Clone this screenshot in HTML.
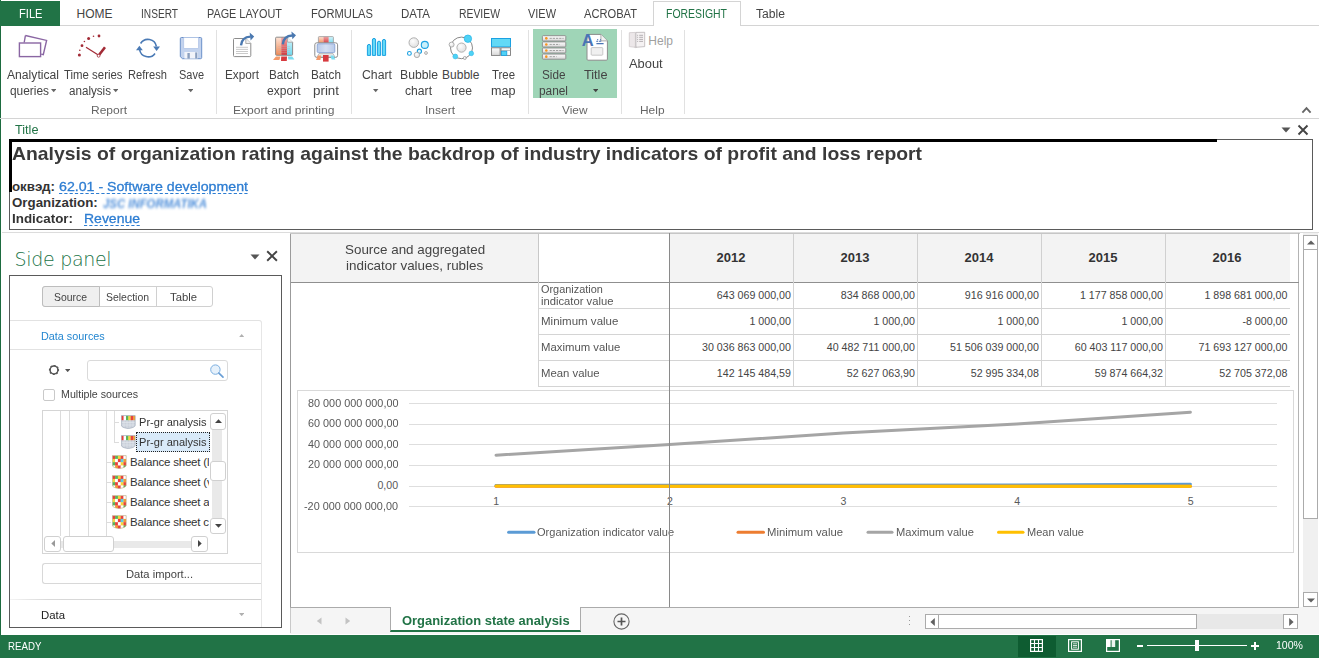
<!DOCTYPE html>
<html><head><meta charset="utf-8"><title>Organization state analysis</title>
<style>
html,body{margin:0;padding:0;background:#fff;}
body{width:1319px;height:658px;position:relative;overflow:hidden;font-family:"Liberation Sans",sans-serif;}
#app{position:absolute;left:0;top:0;width:1319px;height:658px;overflow:hidden;background:#fff;}
#app div,#app span.t,#app svg{position:absolute;box-sizing:border-box;}
span.t{white-space:nowrap;display:block;transform-origin:0 0;}
</style></head><body><div id="app">
<div style="left:0px;top:0px;width:1px;height:658px;background:#1d6b3f;"></div>
<div style="left:0px;top:25px;width:1319px;height:1px;background:#d4d4d4;"></div>
<div style="left:0px;top:1px;width:60px;height:25px;background:#217346;"></div>
<span class="t" style="left:19px;top:6px;font-size:12px;line-height:16px;color:#fff;transform:scaleX(0.9274);">FILE</span>
<span class="t" style="left:76.5px;top:6px;font-size:12px;line-height:16px;color:#444;">HOME</span>
<span class="t" style="left:140.5px;top:6px;font-size:12px;line-height:16px;color:#444;transform:scaleX(0.8450);">INSERT</span>
<span class="t" style="left:206.5px;top:6px;font-size:12px;line-height:16px;color:#444;transform:scaleX(0.9046);">PAGE LAYOUT</span>
<span class="t" style="left:310.5px;top:6px;font-size:12px;line-height:16px;color:#444;transform:scaleX(0.9299);">FORMULAS</span>
<span class="t" style="left:400.5px;top:6px;font-size:12px;line-height:16px;color:#444;transform:scaleX(0.9595);">DATA</span>
<span class="t" style="left:458.5px;top:6px;font-size:12px;line-height:16px;color:#444;transform:scaleX(0.8661);">REVIEW</span>
<span class="t" style="left:527.5px;top:6px;font-size:12px;line-height:16px;color:#444;transform:scaleX(0.9130);">VIEW</span>
<span class="t" style="left:583.5px;top:6px;font-size:12px;line-height:16px;color:#444;transform:scaleX(0.9279);">ACROBAT</span>
<div style="left:653px;top:1px;width:88px;height:25px;background:#fff;border:1px solid #d4d4d4;border-bottom:none;"></div>
<span class="t" style="left:665.5px;top:6px;font-size:12px;line-height:16px;color:#217346;transform:scaleX(0.8714);">FORESIGHT</span>
<span class="t" style="left:755.5px;top:6px;font-size:12px;line-height:16px;color:#444;transform:scaleX(1.0110);">Table</span>
<div style="left:0px;top:118px;width:1319px;height:1px;background:#d4d4d4;"></div>
<div style="left:216px;top:30px;width:1px;height:84px;background:#e1e1e1;"></div>
<div style="left:351px;top:30px;width:1px;height:84px;background:#e1e1e1;"></div>
<div style="left:528px;top:30px;width:1px;height:84px;background:#e1e1e1;"></div>
<div style="left:621px;top:30px;width:1px;height:84px;background:#e1e1e1;"></div>
<div style="left:684px;top:30px;width:1px;height:84px;background:#e1e1e1;"></div>
<div style="left:533px;top:29px;width:84px;height:69px;background:#9fd5b7;"></div>
<span class="t" style="left:6.5px;top:67px;font-size:12px;line-height:16px;color:#444;transform:scaleX(1.0125);">Analytical</span>
<span class="t" style="left:9.5px;top:83px;font-size:12px;line-height:16px;color:#444;transform:scaleX(0.9910);">queries</span>
<svg style="left:51px;top:89px" width="5.4" height="4" viewBox="0 0 5.4 4"><path d="M0 0h5.4 l-2.7 3.2z" fill="#666"/></svg>
<span class="t" style="left:64.45px;top:67px;font-size:12px;line-height:16px;color:#444;transform:scaleX(0.9503);">Time series</span>
<span class="t" style="left:68.5px;top:83px;font-size:12px;line-height:16px;color:#444;transform:scaleX(0.9688);">analysis</span>
<svg style="left:112.5px;top:89px" width="5.4" height="4" viewBox="0 0 5.4 4"><path d="M0 0h5.4 l-2.7 3.2z" fill="#666"/></svg>
<span class="t" style="left:127.5px;top:67px;font-size:12px;line-height:16px;color:#444;transform:scaleX(0.9282);">Refresh</span>
<span class="t" style="left:178.5px;top:67px;font-size:12px;line-height:16px;color:#444;transform:scaleX(0.9141);">Save</span>
<svg style="left:187.8px;top:89px" width="5.4" height="4" viewBox="0 0 5.4 4"><path d="M0 0h5.4 l-2.7 3.2z" fill="#666"/></svg>
<span class="t" style="left:224.5px;top:67px;font-size:12px;line-height:16px;color:#444;transform:scaleX(0.9804);">Export</span>
<span class="t" style="left:268.5px;top:67px;font-size:12px;line-height:16px;color:#444;transform:scaleX(0.9777);">Batch</span>
<span class="t" style="left:266.95px;top:83px;font-size:12px;line-height:16px;color:#444;transform:scaleX(1.0045);">export</span>
<span class="t" style="left:310.5px;top:67px;font-size:12px;line-height:16px;color:#444;transform:scaleX(0.9777);">Batch</span>
<span class="t" style="left:312.5px;top:83px;font-size:12px;line-height:16px;color:#444;transform:scaleX(1.1139);">print</span>
<span class="t" style="left:361.5px;top:67px;font-size:12px;line-height:16px;color:#444;transform:scaleX(1.0224);">Chart</span>
<svg style="left:373.3px;top:89px" width="5.4" height="4" viewBox="0 0 5.4 4"><path d="M0 0h5.4 l-2.7 3.2z" fill="#666"/></svg>
<span class="t" style="left:399.5px;top:67px;font-size:12px;line-height:16px;color:#444;transform:scaleX(1.0170);">Bubble</span>
<span class="t" style="left:405.1px;top:83px;font-size:12px;line-height:16px;color:#444;transform:scaleX(1.0122);">chart</span>
<span class="t" style="left:442.05px;top:67px;font-size:12px;line-height:16px;color:#444;">Bubble</span>
<span class="t" style="left:450.5px;top:83px;font-size:12px;line-height:16px;color:#444;transform:scaleX(1.0157);">tree</span>
<span class="t" style="left:491.5px;top:67px;font-size:12px;line-height:16px;color:#444;transform:scaleX(0.9494);">Tree</span>
<span class="t" style="left:490.55px;top:83px;font-size:12px;line-height:16px;color:#444;transform:scaleX(1.0496);">map</span>
<span class="t" style="left:541.95px;top:67px;font-size:12px;line-height:16px;color:#444;transform:scaleX(0.9785);">Side</span>
<span class="t" style="left:538.5px;top:83px;font-size:12px;line-height:16px;color:#444;transform:scaleX(0.9878);">panel</span>
<span class="t" style="left:583.95px;top:67px;font-size:12px;line-height:16px;color:#444;transform:scaleX(1.0574);">Title</span>
<svg style="left:592.6px;top:89px" width="5.4" height="4" viewBox="0 0 5.4 4"><path d="M0 0h5.4 l-2.7 3.2z" fill="#444"/></svg>
<span class="t" style="left:648.3px;top:33px;font-size:12px;line-height:16px;color:#a0a0a0;">Help</span>
<span class="t" style="left:628.5px;top:56px;font-size:12px;line-height:16px;color:#444;transform:scaleX(1.0747);">About</span>
<span class="t" style="left:90.5px;top:103px;font-size:11px;line-height:14px;color:#666;transform:scaleX(1.0905);">Report</span>
<span class="t" style="left:232.55px;top:103px;font-size:11px;line-height:14px;color:#666;transform:scaleX(1.0993);">Export and printing</span>
<span class="t" style="left:424.5px;top:103px;font-size:11px;line-height:14px;color:#666;transform:scaleX(1.0906);">Insert</span>
<span class="t" style="left:561.95px;top:103px;font-size:11px;line-height:14px;color:#666;transform:scaleX(1.0785);">View</span>
<span class="t" style="left:640.45px;top:103px;font-size:11px;line-height:14px;color:#666;transform:scaleX(1.0830);">Help</span>
<svg style="left:1300px;top:105px" width="14" height="10" viewBox="0 0 14 10"><path d="M2.4 7.6 L6.5 3.2 L10.6 7.6" fill="none" stroke="#666" stroke-width="1.9"/></svg>
<svg style="left:0;top:0" width="700" height="70" viewBox="0 0 700 70"><defs>
<linearGradient id="gO" x1="0" y1="0" x2="0" y2="1"><stop offset="0" stop-color="#fde3d6"/><stop offset="1" stop-color="#f08a55"/></linearGradient>
<linearGradient id="gR" x1="0" y1="0" x2="0" y2="1"><stop offset="0" stop-color="#f0a3a3"/><stop offset="1" stop-color="#d23a3f"/></linearGradient>
<linearGradient id="gC" x1="0" y1="0" x2="0" y2="1"><stop offset="0" stop-color="#d9f6fc"/><stop offset="1" stop-color="#6fd8ee"/></linearGradient>
<linearGradient id="gG" x1="0" y1="0" x2="0" y2="1"><stop offset="0" stop-color="#fdfdfd"/><stop offset="1" stop-color="#d8d8d8"/></linearGradient>
<radialGradient id="gS" cx="0.4" cy="0.35" r="0.7"><stop offset="0" stop-color="#fdfdfd"/><stop offset="1" stop-color="#dedede"/></radialGradient>
<linearGradient id="gB" x1="0" y1="0" x2="1" y2="0"><stop offset="0" stop-color="#b9cbea"/><stop offset="0.5" stop-color="#d6e0f3"/><stop offset="1" stop-color="#b9cbea"/></linearGradient>
</defs><path d="M25.4 35.5 L46.6 40.4 L43.3 54.6 L41.2 54.1" fill="none" stroke="#8a66a3" stroke-width="1.4"/><path d="M25.4 35.5 L24.2 42.5" fill="none" stroke="#8a66a3" stroke-width="1.4"/><rect x="19.4" y="43" width="21.2" height="13.6" fill="#fff" stroke="#8a66a3" stroke-width="1.4"/><circle cx="79.4" cy="55" r="1.5" fill="#a22a35"/><circle cx="79.8" cy="50.2" r="0.8" fill="#a22a35"/><circle cx="82" cy="45.7" r="1.4" fill="#a22a35"/><circle cx="84.4" cy="41.5" r="0.8" fill="#a22a35"/><circle cx="88.6" cy="38.6" r="1.5" fill="#a22a35"/><circle cx="93.5" cy="36.3" r="0.8" fill="#a22a35"/><circle cx="99" cy="36" r="1.4" fill="#a22a35"/><path d="M98.3 55 L86 47.2" stroke="#a22a35" stroke-width="1.25" fill="none"/><path d="M99.2 54.8 L105 47.3" stroke="#a22a35" stroke-width="2.6" fill="none"/><circle cx="98.6" cy="55.8" r="1.4" fill="#fff" stroke="#a22a35" stroke-width="0.8"/><path d="M140.6 43.5 A8.6 8.6 0 0 1 156.4 46.5" fill="none" stroke="#4a7ab5" stroke-width="1.6"/><path d="M153.2 46.6 L160 46.6 L156.6 51 Z" fill="#4a7ab5"/><path d="M155 53.4 A8.6 8.6 0 0 1 139.6 49.5" fill="none" stroke="#4a7ab5" stroke-width="1.6"/><path d="M136 50.2 L142.8 50.2 L139.4 45.8 Z" fill="#4a7ab5"/><path d="M181.5 37.5 h19 a1.2 1.2 0 0 1 1.2 1.2 v18.8 a1.2 1.2 0 0 1 -1.2 1.2 h-18 l-2.2 -2 v-18 a1.2 1.2 0 0 1 1.2 -1.2z" fill="#c3d3ee" stroke="#6b90c9" stroke-width="1"/><rect x="183.8" y="37.5" width="14.6" height="10.8" fill="#fff" stroke="#a9bfe4" stroke-width="0.6"/><rect x="184.4" y="52" width="13.2" height="6.6" fill="#f2f4fa"/><rect x="187.4" y="53" width="2.4" height="5.6" fill="#8a9fbf"/><rect x="195.2" y="52.4" width="2" height="6.2" fill="#8a9fbf"/><path d="M234.5 38.5 H245.8 L250.8 43.5 V55.6 a1 1 0 0 1 -1 1 H234.5 a1 1 0 0 1 -1 -1 V39.5 a1 1 0 0 1 1 -1z" fill="#fff" stroke="#8c8c8c" stroke-width="1"/><path d="M245.8 38.5 V43.5 H250.8" fill="#f2f2f2" stroke="#9a9a9a" stroke-width="0.8"/><path d="M236 47.3 H248" stroke="#c4c4c4" stroke-width="0.9"/><path d="M236 49.4 H248" stroke="#c4c4c4" stroke-width="0.9"/><path d="M236 51.5 H248" stroke="#c4c4c4" stroke-width="0.9"/><path d="M236 53.5 H248" stroke="#c4c4c4" stroke-width="0.9"/><path d="M241 45.4 C241.5 40 244.5 36.8 250.5 36.6" fill="none" stroke="#4a78b0" stroke-width="2.4"/><path d="M249.6 32.6 L254.2 36.4 L250.6 40.4 Z" fill="#4a78b0"/><rect x="275.6" y="37.2" width="5.6" height="18" fill="url(#gO)"/><rect x="281.2" y="37.2" width="5.8" height="18" fill="url(#gR)"/><rect x="287" y="37.2" width="5.6" height="18" fill="url(#gC)"/><path d="M276.6 37.2 H287.6 L292.6 42.2 V54.3 a1 1 0 0 1 -1 1 H276.6 a1 1 0 0 1 -1 -1 V38.2 a1 1 0 0 1 1 -1z" fill="none" stroke="#8c8c8c" stroke-width="1"/><path d="M287.6 37.2 H293.2 V42.2 Z" fill="#fff"/><path d="M287.6 37.2 V42.2 H292.6" fill="#f2f2f2" stroke="#9a9a9a" stroke-width="0.8"/><path d="M278 46.3 H290" stroke="#c9a9a9" stroke-width="0.6" opacity="0.7"/><path d="M278 48.3 H290" stroke="#c9a9a9" stroke-width="0.6" opacity="0.7"/><path d="M278 50.3 H290" stroke="#c9a9a9" stroke-width="0.6" opacity="0.7"/><path d="M278 52.3 H290" stroke="#c9a9a9" stroke-width="0.6" opacity="0.7"/><path d="M276 56.4 H280.4 L279.4 60 H273 Z" fill="#f49a6a"/><path d="M281.2 56.4 H287 L286.8 61 H281 Z" fill="#d73a3f"/><path d="M287.8 56.4 H292.2 L294.4 59.4 H288.4 Z" fill="#7adcf0"/><path d="M282.8 44.3 C283.3 38.9 286.3 35.7 292.3 35.5" fill="none" stroke="#4a78b0" stroke-width="2.4"/><path d="M291.4 31.5 L296 35.3 L292.4 39.3 Z" fill="#4a78b0"/><rect x="318.4" y="36.6" width="5" height="7" fill="url(#gO)"/><rect x="323.4" y="36.6" width="5.4" height="7" fill="url(#gR)"/><rect x="328.8" y="36.6" width="4.6" height="7" fill="url(#gC)"/><rect x="318.4" y="36.6" width="15" height="7" fill="none" stroke="#9a9a9a" stroke-width="0.8" rx="0.8"/><rect x="314.8" y="42.8" width="22.8" height="14.6" rx="2" fill="#fff" stroke="#8c8c8c" stroke-width="1"/><rect x="317.2" y="43.8" width="17.6" height="8.8" rx="1.2" fill="url(#gB)" stroke="#7f9bd0" stroke-width="0.8"/><path d="M319 53.6 H333 L335 57 H317 Z" fill="#e9e9e9" stroke="#9a9a9a" stroke-width="0.6"/><path d="M318 55.4 H321.2 L320.4 60 H316 Z" fill="#f49a6a"/><path d="M323 55 H328.6 V61.6 H323 Z" fill="#d73a3f"/><path d="M330.4 55.4 H333.4 L335.4 59.6 H331.6 Z" fill="#7adcf0"/><path d="M367.4 55.4 V46 a1.6 1.6 0 0 1 3.2 0 V55.4 Z" fill="#62d9f6" stroke="#1ba1e2" stroke-width="1"/><path d="M372.4 55.4 V40 a1.6 1.6 0 0 1 3.2 0 V55.4 Z" fill="#62d9f6" stroke="#1ba1e2" stroke-width="1"/><path d="M377.4 55.4 V42.8 a1.6 1.6 0 0 1 3.2 0 V55.4 Z" fill="#62d9f6" stroke="#1ba1e2" stroke-width="1"/><path d="M382.4 55.4 V41 a1.6 1.6 0 0 1 3.2 0 V55.4 Z" fill="#62d9f6" stroke="#1ba1e2" stroke-width="1"/><circle cx="413.8" cy="42.6" r="4.8" fill="url(#gS)" stroke="#a8a8a8" stroke-width="0.9"/><circle cx="424.8" cy="44.9" r="3.5" fill="#c9f0fb" stroke="#1ba1e2" stroke-width="1.1"/><circle cx="409.4" cy="53.4" r="1.9" fill="#fff" stroke="#1ba1e2" stroke-width="1.1"/><circle cx="419.4" cy="51.2" r="2.1" fill="#e4f7fd" stroke="#1ba1e2" stroke-width="1.1"/><circle cx="416.9" cy="54.9" r="2.7" fill="url(#gS)" stroke="#a8a8a8" stroke-width="0.9"/><circle cx="426" cy="53" r="1.4" fill="url(#gS)" stroke="#a8a8a8" stroke-width="0.9"/><ellipse cx="461.5" cy="47.9" rx="11" ry="10.8" fill="none" stroke="#7a7a7a" stroke-width="0.9"/><circle cx="461.5" cy="47.6" r="4.6" fill="url(#gS)" stroke="#a8a8a8" stroke-width="0.9"/><circle cx="467.9" cy="38.7" r="3.7" fill="#4fd2f5" stroke="#2bb8ea" stroke-width="0.8"/><circle cx="451.6" cy="44.6" r="2.5" fill="url(#gS)" stroke="#a8a8a8" stroke-width="0.9"/><circle cx="471.3" cy="53.4" r="2.3" fill="#4fd2f5" stroke="#2bb8ea" stroke-width="0.6"/><circle cx="455.3" cy="56.5" r="2.4" fill="#4fd2f5" stroke="#2bb8ea" stroke-width="0.6"/><circle cx="464.8" cy="58" r="1.5" fill="url(#gS)" stroke="#a8a8a8" stroke-width="0.9"/><rect x="491.5" y="38.5" width="19" height="8.4" fill="#62d9f6" stroke="#1ba1e2" stroke-width="1"/><rect x="491.5" y="47.8" width="8.6" height="7.6" fill="url(#gG)" stroke="#7c7c7c" stroke-width="0.9"/><rect x="501" y="47.8" width="9.5" height="7.6" fill="#fff" stroke="#7c7c7c" stroke-width="0.9"/><path d="M501 50.4 H510.5" stroke="#9a9a9a" stroke-width="0.7"/><rect x="501.4" y="51.2" width="5.4" height="4.2" fill="#4fd2f5" stroke="#1ba1e2" stroke-width="0.8"/><rect x="542.4" y="35.7" width="23.4" height="5.3" rx="0.8" fill="url(#gG)" stroke="#8a8a8a" stroke-width="0.9"/><circle cx="546.3" cy="38.35" r="1.3" fill="#f7941d"/><path d="M549.6 38.35 h14" stroke="#9a9a9a" stroke-width="0.9" stroke-dasharray="2.2 1"/><rect x="542.4" y="41.9" width="23.4" height="5.1" rx="0.8" fill="url(#gG)" stroke="#8a8a8a" stroke-width="0.9"/><circle cx="546.3" cy="44.45" r="1.3" fill="#f7941d"/><path d="M549.6 44.45 h10" stroke="#9a9a9a" stroke-width="0.9" stroke-dasharray="2.2 1"/><rect x="542.4" y="48" width="23.4" height="5" rx="0.8" fill="url(#gG)" stroke="#8a8a8a" stroke-width="0.9"/><circle cx="546.3" cy="50.5" r="1.3" fill="#f7941d"/><path d="M549.6 50.5 h14" stroke="#9a9a9a" stroke-width="0.9" stroke-dasharray="2.2 1"/><rect x="542.4" y="54.1" width="23.4" height="5.1" rx="0.8" fill="url(#gG)" stroke="#8a8a8a" stroke-width="0.9"/><circle cx="546.3" cy="56.65" r="1.3" fill="#f7941d"/><path d="M549.6 56.65 h7" stroke="#9a9a9a" stroke-width="0.9" stroke-dasharray="2.2 1"/><path d="M588 34.4 H600.9 L607.4 40.9 V59.2 a1 1 0 0 1 -1 1 H588 a1 1 0 0 1 -1 -1 V35.4 a1 1 0 0 1 1 -1z" fill="#fff" stroke="#8c8c8c" stroke-width="1"/><path d="M600.9 34.4 V40.9 H607.4" fill="#f2f2f2" stroke="#9a9a9a" stroke-width="0.8"/><rect x="591.2" y="47.6" width="11.6" height="7.6" rx="0.8" fill="#f0f0f0" stroke="#bdbdbd" stroke-width="0.8"/><text x="581.8" y="46" font-family="Liberation Sans,sans-serif" font-weight="bold" font-size="16.5" fill="#4a74b4">A</text><path d="M596.4 43.6 H603.6 M596.4 41.4 h1.4 M598.8 41.2 h2.4 M597.2 39.6 h1 M600 39.8 h1" stroke="#4a74b4" stroke-width="1.1"/><path d="M629.3 32.7 L635.4 32.4 V47.3 L629.3 46.6 Z" fill="#ece7e9" stroke="#cfc9cc" stroke-width="0.8"/><path d="M635.9 32.4 L644.7 32.3 V46.6 L635.9 47.3 Z" fill="#f5f2f3" stroke="#b9b4b6" stroke-width="0.8"/><path d="M634.4 47 Q635.6 48.2 636.8 47" fill="none" stroke="#c2bcbf" stroke-width="0.8"/><path d="M637.1 35.3 h1 M639.2 35.3 h3.8" stroke="#a5a0a2" stroke-width="0.8"/><path d="M637.1 37.3 h1 M639.2 37.3 h3.8" stroke="#a5a0a2" stroke-width="0.8"/><path d="M637.1 39.4 h1 M639.2 39.4 h3.8" stroke="#a5a0a2" stroke-width="0.8"/><path d="M637.1 41.4 h1 M639.2 41.4 h3.8" stroke="#a5a0a2" stroke-width="0.8"/></svg>
<span class="t" style="left:15px;top:122px;font-size:12px;line-height:16px;color:#217346;transform:scaleX(1.0574);">Title</span>
<svg style="left:1280.5px;top:127.4px" width="10" height="6" viewBox="0 0 10 6"><path d="M0.5 0.5 H9.5 L5 5.5 Z" fill="#555"/></svg>
<svg style="left:1297px;top:124px" width="12" height="12" viewBox="0 0 12 12"><path d="M1.5 1.5 L10.5 10.5 M10.5 1.5 L1.5 10.5" stroke="#444" stroke-width="1.9" fill="none"/></svg>
<div style="left:9px;top:139px;width:1304px;height:91px;border:1px solid #5a5a5a;background:#fff;"></div>
<div style="left:9px;top:139px;width:1208px;height:3px;background:#000;"></div>
<div style="left:9px;top:139px;width:3px;height:53px;background:#000;"></div>
<span class="t" style="left:11.5px;top:142px;font-size:19px;line-height:24px;color:#3a3a3a;font-weight:bold;transform:scaleX(1.0190);">Analysis of organization rating against the backdrop of industry indicators of profit and loss report</span>
<span class="t" style="left:12px;top:179px;font-size:13.3px;line-height:16px;color:#333;font-weight:bold;">оквэд:</span>
<span class="t" style="left:58.5px;top:179px;font-size:13.3px;line-height:16px;color:#2d7dd2;transform:scaleX(1.0652);text-decoration:underline dashed #2d7dd2 1px;text-underline-offset:2px;-webkit-text-stroke:0.3px #2d7dd2;">62.01 - Software development</span>
<span class="t" style="left:12px;top:195px;font-size:13.3px;line-height:16px;color:#333;font-weight:bold;">Organization:</span>
<span class="t" style="left:102.5px;top:197px;font-size:12.5px;line-height:14px;color:#4f8fda;font-weight:bold;transform:scaleX(0.9095);filter:blur(1.4px);font-style:italic;">JSC INFORMATIKA</span>
<span class="t" style="left:12px;top:211px;font-size:13.3px;line-height:16px;color:#333;font-weight:bold;transform:scaleX(1.0068);">Indicator:</span>
<span class="t" style="left:84px;top:211px;font-size:13.3px;line-height:16px;color:#2d7dd2;transform:scaleX(1.0519);text-decoration:underline dashed #2d7dd2 1px;text-underline-offset:2px;-webkit-text-stroke:0.3px #2d7dd2;">Revenue</span>
<div style="left:2px;top:232px;width:1317px;height:1px;background:#dcdcdc;"></div>
<span class="t" style="left:14.5px;top:246px;font-family:'DejaVu Sans Light','Liberation Sans',sans-serif;font-size:19px;line-height:26px;letter-spacing:-0.3px;color:#217346;">Side panel</span>
<svg style="left:249.6px;top:253.6px" width="10" height="6" viewBox="0 0 10 6"><path d="M0.5 0.5 H9.5 L5 5.5 Z" fill="#555"/></svg>
<svg style="left:266px;top:250px" width="12" height="12" viewBox="0 0 12 12"><path d="M1.2 1.2 L10.9 10.8 M10.9 1.2 L1.2 10.8" stroke="#444" stroke-width="1.9" fill="none"/></svg>
<div style="left:9px;top:275px;width:273px;height:353px;border:1px solid #5a5a5a;background:#fff;"></div>
<div style="left:42px;top:286px;width:171px;height:21px;border:1px solid #d0d0d0;border-radius:3px;background:#fff;"></div>
<div style="left:42px;top:286px;width:57.5px;height:21px;border:1px solid #bdbdbd;border-radius:3px 0 0 3px;background:#efefef;"></div>
<div style="left:155.5px;top:287px;width:1px;height:19px;background:#d0d0d0;"></div>
<span class="t" style="left:53.5px;top:290px;font-size:11px;line-height:14px;color:#444;transform:scaleX(0.9469);">Source</span>
<span class="t" style="left:105.5px;top:290px;font-size:11px;line-height:14px;color:#444;transform:scaleX(0.9503);">Selection</span>
<span class="t" style="left:169.5px;top:290px;font-size:11px;line-height:14px;color:#444;transform:scaleX(1.0268);">Table</span>
<div style="left:10px;top:320px;width:252px;height:30px;border-top:1px solid #e2e2e2;border-right:1px solid #e2e2e2;border-bottom:1px solid #e2e2e2;border-radius:0 3px 0 0;"></div>
<span class="t" style="left:41.3px;top:329px;font-size:11px;line-height:14px;color:#2386d0;transform:scaleX(0.9830);">Data sources</span>
<svg style="left:239px;top:334px" width="5.4" height="3.2" viewBox="0 0 5.4 3.2"><path d="M0 3.2 L2.7 0 L5.4 3.2 Z" fill="#b0b0b0"/></svg>
<svg style="left:47px;top:362.8px" width="14" height="14" viewBox="0 0 14 14"><circle cx="7" cy="7" r="3.9" fill="none" stroke="#555" stroke-width="1.5"/><circle cx="7" cy="7" r="4.5" fill="none" stroke="#555" stroke-width="1.2" stroke-dasharray="1.77 1.765" transform="rotate(-11 7 7)"/></svg>
<svg style="left:64.8px;top:369px" width="5.4" height="3.2" viewBox="0 0 5.4 3.2"><path d="M0 0 H5.4 L2.7 3.2 Z" fill="#555"/></svg>
<div style="left:87px;top:360px;width:141px;height:20.5px;border:1px solid #dadada;border-radius:3px;background:#fff;"></div>
<svg style="left:208px;top:362px" width="18" height="17" viewBox="0 0 18 17"><circle cx="7.4" cy="7.6" r="4.7" fill="#e6f1fb" stroke="#7aaee0" stroke-width="1"/><path d="M10.9 11.2 L15 15.2" stroke="#6a9fd6" stroke-width="1.7" stroke-linecap="round"/></svg>
<div style="left:42.5px;top:388.5px;width:12px;height:12px;border:1px solid #c9c9c9;border-radius:2px;background:#fff;"></div>
<span class="t" style="left:60.5px;top:387px;font-size:11px;line-height:14px;color:#444;transform:scaleX(0.9689);">Multiple sources</span>
<div style="left:42px;top:410px;width:185.5px;height:144px;border:1px solid #d5d5d5;background:#fff;"></div>
<div style="left:60px;top:411px;width:1px;height:125px;background:#dcdcdc;"></div>
<div style="left:69px;top:411px;width:1px;height:125px;background:#dcdcdc;"></div>
<div style="left:87.5px;top:411px;width:1px;height:125px;background:#dcdcdc;"></div>
<div style="left:106px;top:411px;width:1px;height:125px;background:#dcdcdc;"></div>
<div style="left:114px;top:411px;width:1px;height:31.5px;background:#dcdcdc;"></div>
<svg style="left:0;top:0" width="0" height="0"><defs><clipPath id="cup"><path d="M0.3 0.6 H14.2 V10.2 Q14.2 12.6 7.2 13.6 Q0.3 12.6 0.3 10.2 Z"/></clipPath></defs></svg>
<div style="left:136px;top:432px;width:73.5px;height:19.5px;background:#d9eaf9;border:1px dotted #222;"></div>
<div style="left:114px;top:422px;width:5px;height:1px;background:#dcdcdc;"></div>
<svg style="left:121px;top:414.7px" width="15" height="14" viewBox="0 0 15 14"><g clip-path="url(#cup)"><rect x="0" y="0" width="15" height="14" fill="#c9d0da"/><rect x="0.3" y="0.6" width="2.5" height="4.6" fill="#e8413c"/><rect x="2.65" y="0.6" width="2.5" height="4.6" fill="#ffffff"/><rect x="5" y="0.6" width="2.5" height="4.6" fill="#58b55a"/><rect x="7.35" y="0.6" width="2.5" height="4.6" fill="#f5d63d"/><rect x="9.7" y="0.6" width="2.5" height="4.6" fill="#e8413c"/><rect x="12.05" y="0.6" width="2.5" height="4.6" fill="#f39c35"/><path d="M0 7.5 H15 M0 10 H15 M3 5.2 V14 M6 5.2 V14 M9 5.2 V14 M12 5.2 V14" stroke="#e4e8ee" stroke-width="0.6"/></g><path d="M0.3 0.6 H14.2 V10.2 Q14.2 12.6 7.2 13.6 Q0.3 12.6 0.3 10.2 Z" fill="none" stroke="#9aa6b5" stroke-width="0.6"/></svg>
<span class="t" style="left:138.9px;top:415px;font-size:11.5px;line-height:14px;color:#333;transform:scaleX(0.9617);">Pr-gr analysis</span>
<div style="left:114px;top:442px;width:5px;height:1px;background:#dcdcdc;"></div>
<svg style="left:121px;top:434.7px" width="15" height="14" viewBox="0 0 15 14"><g clip-path="url(#cup)"><rect x="0" y="0" width="15" height="14" fill="#c9d0da"/><rect x="0.3" y="0.6" width="2.5" height="4.6" fill="#e8413c"/><rect x="2.65" y="0.6" width="2.5" height="4.6" fill="#ffffff"/><rect x="5" y="0.6" width="2.5" height="4.6" fill="#58b55a"/><rect x="7.35" y="0.6" width="2.5" height="4.6" fill="#f5d63d"/><rect x="9.7" y="0.6" width="2.5" height="4.6" fill="#e8413c"/><rect x="12.05" y="0.6" width="2.5" height="4.6" fill="#f39c35"/><path d="M0 7.5 H15 M0 10 H15 M3 5.2 V14 M6 5.2 V14 M9 5.2 V14 M12 5.2 V14" stroke="#e4e8ee" stroke-width="0.6"/></g><path d="M0.3 0.6 H14.2 V10.2 Q14.2 12.6 7.2 13.6 Q0.3 12.6 0.3 10.2 Z" fill="none" stroke="#9aa6b5" stroke-width="0.6"/></svg>
<span class="t" style="left:138.9px;top:435px;font-size:11.5px;line-height:14px;color:#333;transform:scaleX(0.9617);">Pr-gr analysis</span>
<div style="left:107px;top:462px;width:4px;height:1px;background:#dcdcdc;"></div>
<svg style="left:111.8px;top:454.7px" width="15" height="14" viewBox="0 0 15 14"><g clip-path="url(#cup)"><rect x="0.3" y="0.6" width="3" height="3.6" fill="#e8413c"/><rect x="3.1" y="0.6" width="3" height="3.6" fill="#58b55a"/><rect x="5.9" y="0.6" width="3" height="3.6" fill="#f5d63d"/><rect x="8.7" y="0.6" width="3" height="3.6" fill="#e8413c"/><rect x="11.5" y="0.6" width="3" height="3.6" fill="#ffffff"/><rect x="0.3" y="3.9" width="3" height="3.6" fill="#f5d63d"/><rect x="3.1" y="3.9" width="3" height="3.6" fill="#ffffff"/><rect x="5.9" y="3.9" width="3" height="3.6" fill="#e8413c"/><rect x="8.7" y="3.9" width="3" height="3.6" fill="#5bcfe6"/><rect x="11.5" y="3.9" width="3" height="3.6" fill="#f39c35"/><rect x="0.3" y="7.2" width="3" height="3.6" fill="#58b55a"/><rect x="3.1" y="7.2" width="3" height="3.6" fill="#e8413c"/><rect x="5.9" y="7.2" width="3" height="3.6" fill="#ffffff"/><rect x="8.7" y="7.2" width="3" height="3.6" fill="#f5d63d"/><rect x="11.5" y="7.2" width="3" height="3.6" fill="#e8413c"/><rect x="0.3" y="10.5" width="3" height="3.6" fill="#ffffff"/><rect x="3.1" y="10.5" width="3" height="3.6" fill="#f39c35"/><rect x="5.9" y="10.5" width="3" height="3.6" fill="#e8413c"/><rect x="8.7" y="10.5" width="3" height="3.6" fill="#ffffff"/><rect x="11.5" y="10.5" width="3" height="3.6" fill="#58b55a"/></g><path d="M0.3 0.6 H14.2 V10.2 Q14.2 12.6 7.2 13.6 Q0.3 12.6 0.3 10.2 Z" fill="none" stroke="#b9a27a" stroke-width="0.6"/></svg>
<span class="t" style="left:130px;top:455px;font-size:11.5px;line-height:14px;color:#333;letter-spacing:-0.198px;width:79px;overflow:hidden;">Balance sheet (l</span>
<div style="left:107px;top:482px;width:4px;height:1px;background:#dcdcdc;"></div>
<svg style="left:111.8px;top:474.7px" width="15" height="14" viewBox="0 0 15 14"><g clip-path="url(#cup)"><rect x="0.3" y="0.6" width="3" height="3.6" fill="#e8413c"/><rect x="3.1" y="0.6" width="3" height="3.6" fill="#58b55a"/><rect x="5.9" y="0.6" width="3" height="3.6" fill="#f5d63d"/><rect x="8.7" y="0.6" width="3" height="3.6" fill="#e8413c"/><rect x="11.5" y="0.6" width="3" height="3.6" fill="#ffffff"/><rect x="0.3" y="3.9" width="3" height="3.6" fill="#f5d63d"/><rect x="3.1" y="3.9" width="3" height="3.6" fill="#ffffff"/><rect x="5.9" y="3.9" width="3" height="3.6" fill="#e8413c"/><rect x="8.7" y="3.9" width="3" height="3.6" fill="#5bcfe6"/><rect x="11.5" y="3.9" width="3" height="3.6" fill="#f39c35"/><rect x="0.3" y="7.2" width="3" height="3.6" fill="#58b55a"/><rect x="3.1" y="7.2" width="3" height="3.6" fill="#e8413c"/><rect x="5.9" y="7.2" width="3" height="3.6" fill="#ffffff"/><rect x="8.7" y="7.2" width="3" height="3.6" fill="#f5d63d"/><rect x="11.5" y="7.2" width="3" height="3.6" fill="#e8413c"/><rect x="0.3" y="10.5" width="3" height="3.6" fill="#ffffff"/><rect x="3.1" y="10.5" width="3" height="3.6" fill="#f39c35"/><rect x="5.9" y="10.5" width="3" height="3.6" fill="#e8413c"/><rect x="8.7" y="10.5" width="3" height="3.6" fill="#ffffff"/><rect x="11.5" y="10.5" width="3" height="3.6" fill="#58b55a"/></g><path d="M0.3 0.6 H14.2 V10.2 Q14.2 12.6 7.2 13.6 Q0.3 12.6 0.3 10.2 Z" fill="none" stroke="#b9a27a" stroke-width="0.6"/></svg>
<span class="t" style="left:130px;top:475px;font-size:11.5px;line-height:14px;color:#333;letter-spacing:-0.198px;width:79px;overflow:hidden;">Balance sheet (v</span>
<div style="left:107px;top:502px;width:4px;height:1px;background:#dcdcdc;"></div>
<svg style="left:111.8px;top:494.7px" width="15" height="14" viewBox="0 0 15 14"><g clip-path="url(#cup)"><rect x="0.3" y="0.6" width="3" height="3.6" fill="#e8413c"/><rect x="3.1" y="0.6" width="3" height="3.6" fill="#58b55a"/><rect x="5.9" y="0.6" width="3" height="3.6" fill="#f5d63d"/><rect x="8.7" y="0.6" width="3" height="3.6" fill="#e8413c"/><rect x="11.5" y="0.6" width="3" height="3.6" fill="#ffffff"/><rect x="0.3" y="3.9" width="3" height="3.6" fill="#f5d63d"/><rect x="3.1" y="3.9" width="3" height="3.6" fill="#ffffff"/><rect x="5.9" y="3.9" width="3" height="3.6" fill="#e8413c"/><rect x="8.7" y="3.9" width="3" height="3.6" fill="#5bcfe6"/><rect x="11.5" y="3.9" width="3" height="3.6" fill="#f39c35"/><rect x="0.3" y="7.2" width="3" height="3.6" fill="#58b55a"/><rect x="3.1" y="7.2" width="3" height="3.6" fill="#e8413c"/><rect x="5.9" y="7.2" width="3" height="3.6" fill="#ffffff"/><rect x="8.7" y="7.2" width="3" height="3.6" fill="#f5d63d"/><rect x="11.5" y="7.2" width="3" height="3.6" fill="#e8413c"/><rect x="0.3" y="10.5" width="3" height="3.6" fill="#ffffff"/><rect x="3.1" y="10.5" width="3" height="3.6" fill="#f39c35"/><rect x="5.9" y="10.5" width="3" height="3.6" fill="#e8413c"/><rect x="8.7" y="10.5" width="3" height="3.6" fill="#ffffff"/><rect x="11.5" y="10.5" width="3" height="3.6" fill="#58b55a"/></g><path d="M0.3 0.6 H14.2 V10.2 Q14.2 12.6 7.2 13.6 Q0.3 12.6 0.3 10.2 Z" fill="none" stroke="#b9a27a" stroke-width="0.6"/></svg>
<span class="t" style="left:130px;top:495px;font-size:11.5px;line-height:14px;color:#333;letter-spacing:-0.198px;width:79px;overflow:hidden;">Balance sheet a</span>
<div style="left:107px;top:522px;width:4px;height:1px;background:#dcdcdc;"></div>
<svg style="left:111.8px;top:514.7px" width="15" height="14" viewBox="0 0 15 14"><g clip-path="url(#cup)"><rect x="0.3" y="0.6" width="3" height="3.6" fill="#e8413c"/><rect x="3.1" y="0.6" width="3" height="3.6" fill="#58b55a"/><rect x="5.9" y="0.6" width="3" height="3.6" fill="#f5d63d"/><rect x="8.7" y="0.6" width="3" height="3.6" fill="#e8413c"/><rect x="11.5" y="0.6" width="3" height="3.6" fill="#ffffff"/><rect x="0.3" y="3.9" width="3" height="3.6" fill="#f5d63d"/><rect x="3.1" y="3.9" width="3" height="3.6" fill="#ffffff"/><rect x="5.9" y="3.9" width="3" height="3.6" fill="#e8413c"/><rect x="8.7" y="3.9" width="3" height="3.6" fill="#5bcfe6"/><rect x="11.5" y="3.9" width="3" height="3.6" fill="#f39c35"/><rect x="0.3" y="7.2" width="3" height="3.6" fill="#58b55a"/><rect x="3.1" y="7.2" width="3" height="3.6" fill="#e8413c"/><rect x="5.9" y="7.2" width="3" height="3.6" fill="#ffffff"/><rect x="8.7" y="7.2" width="3" height="3.6" fill="#f5d63d"/><rect x="11.5" y="7.2" width="3" height="3.6" fill="#e8413c"/><rect x="0.3" y="10.5" width="3" height="3.6" fill="#ffffff"/><rect x="3.1" y="10.5" width="3" height="3.6" fill="#f39c35"/><rect x="5.9" y="10.5" width="3" height="3.6" fill="#e8413c"/><rect x="8.7" y="10.5" width="3" height="3.6" fill="#ffffff"/><rect x="11.5" y="10.5" width="3" height="3.6" fill="#58b55a"/></g><path d="M0.3 0.6 H14.2 V10.2 Q14.2 12.6 7.2 13.6 Q0.3 12.6 0.3 10.2 Z" fill="none" stroke="#b9a27a" stroke-width="0.6"/></svg>
<span class="t" style="left:130px;top:515px;font-size:11.5px;line-height:14px;color:#333;letter-spacing:-0.198px;width:79px;overflow:hidden;">Balance sheet c</span>
<div style="left:210px;top:411px;width:16.5px;height:124px;background:#fff;"></div>
<div style="left:212px;top:429px;width:10px;height:89px;background:#e9e9e9;"></div>
<div style="left:209.5px;top:413px;width:16.5px;height:16.5px;border:1px solid #d0d0d0;border-radius:3px;background:#fff;"></div>
<svg style="left:214.5px;top:419px" width="7" height="4" viewBox="0 0 7 4"><path d="M0 4 L3.5 0.3 L7 4 Z" fill="#444"/></svg>
<div style="left:209.5px;top:461px;width:16.5px;height:19.5px;border:1px solid #d0d0d0;border-radius:3px;background:#fff;"></div>
<div style="left:209.5px;top:517.5px;width:16.5px;height:16.5px;border:1px solid #d0d0d0;border-radius:3px;background:#fff;"></div>
<svg style="left:214.5px;top:524px" width="7" height="4" viewBox="0 0 7 4"><path d="M0 0 H7 L3.5 3.7 Z" fill="#444"/></svg>
<div style="left:43px;top:536px;width:166px;height:17px;background:#fff;"></div>
<div style="left:61px;top:540.5px;width:131px;height:7px;background:#e9e9e9;"></div>
<div style="left:44px;top:535.5px;width:17px;height:16px;border:1px solid #d0d0d0;border-radius:3px;background:#fff;"></div>
<svg style="left:50.5px;top:540px" width="4" height="7" viewBox="0 0 4 7"><path d="M4 0 V7 L0.3 3.5 Z" fill="#999"/></svg>
<div style="left:62.5px;top:535.5px;width:51.5px;height:16px;border:1px solid #d0d0d0;border-radius:3px;background:#fff;"></div>
<div style="left:191px;top:535.5px;width:17px;height:16px;border:1px solid #d0d0d0;border-radius:3px;background:#fff;"></div>
<svg style="left:197.5px;top:540px" width="4" height="7" viewBox="0 0 4 7"><path d="M0 0 V7 L3.7 3.5 Z" fill="#444"/></svg>
<div style="left:42px;top:563px;width:218.5px;height:21px;border:1px solid #d8d8d8;border-right:none;border-radius:3px 0 0 3px;background:#fff;"></div>
<div style="left:261px;top:322px;width:1px;height:305px;background:#e6e6e6;"></div>
<span class="t" style="left:125.5px;top:567px;font-size:11px;line-height:14px;color:#444;transform:scaleX(1.0149);">Data import...</span>
<div style="left:10px;top:599px;width:250.5px;height:1px;background:linear-gradient(to right,#f4f4f4,#d9d9d9 15%,#d0d0d0);"></div>
<span class="t" style="left:40.5px;top:608px;font-size:11px;line-height:14px;color:#222;transform:scaleX(1.0330);">Data</span>
<svg style="left:239px;top:613px" width="5.4" height="3.2" viewBox="0 0 5.4 3.2"><path d="M0 0 H5.4 L2.7 3.2 Z" fill="#b0b0b0"/></svg>
<div style="left:290px;top:233px;width:1px;height:375px;background:#9b9b9b;"></div>
<div style="left:290px;top:233px;width:1010px;height:1px;background:#c6c6c6;"></div>
<div style="left:1298px;top:233px;width:1px;height:375px;background:#b4b4b4;"></div>
<div style="left:291px;top:234px;width:248px;height:48px;background:#f3f3f3;border-right:1px solid #c8c8c8;"></div>
<div style="left:669.5px;top:234px;width:124px;height:48px;background:#f3f3f3;border-right:1px solid #d0d0d0;"></div>
<div style="left:793.5px;top:234px;width:124px;height:48px;background:#f3f3f3;border-right:1px solid #d0d0d0;"></div>
<div style="left:917.5px;top:234px;width:124px;height:48px;background:#f3f3f3;border-right:1px solid #d0d0d0;"></div>
<div style="left:1041.5px;top:234px;width:124px;height:48px;background:#f3f3f3;border-right:1px solid #d0d0d0;"></div>
<div style="left:1165.5px;top:234px;width:124px;height:48px;background:#f3f3f3;"></div>
<div style="left:291px;top:281.5px;width:1008px;height:1px;background:#8f8f8f;"></div>
<span class="t" style="left:345.3px;top:242px;font-size:12.9px;line-height:16px;color:#444;transform:scaleX(1.0398);">Source and aggregated</span>
<span class="t" style="left:346.25px;top:258px;font-size:12.9px;line-height:16px;color:#444;transform:scaleX(1.0407);">indicator values, rubles</span>
<span class="t" style="left:716.5px;top:250px;font-size:13px;line-height:16px;color:#333;font-weight:bold;">2012</span>
<span class="t" style="left:840.5px;top:250px;font-size:13px;line-height:16px;color:#333;font-weight:bold;">2013</span>
<span class="t" style="left:964.5px;top:250px;font-size:13px;line-height:16px;color:#333;font-weight:bold;">2014</span>
<span class="t" style="left:1088.5px;top:250px;font-size:13px;line-height:16px;color:#333;font-weight:bold;">2015</span>
<span class="t" style="left:1212.5px;top:250px;font-size:13px;line-height:16px;color:#333;font-weight:bold;">2016</span>
<div style="left:538px;top:308px;width:752px;height:1px;background:#d4d4d4;"></div>
<div style="left:538px;top:334px;width:752px;height:1px;background:#d4d4d4;"></div>
<div style="left:538px;top:360px;width:752px;height:1px;background:#d4d4d4;"></div>
<div style="left:538px;top:386px;width:752px;height:1px;background:#d4d4d4;"></div>
<div style="left:538px;top:282px;width:1px;height:105px;background:#d4d4d4;"></div>
<div style="left:793px;top:282px;width:1px;height:105px;background:#d4d4d4;"></div>
<div style="left:917px;top:282px;width:1px;height:105px;background:#d4d4d4;"></div>
<div style="left:1041px;top:282px;width:1px;height:105px;background:#d4d4d4;"></div>
<div style="left:1165px;top:282px;width:1px;height:105px;background:#d4d4d4;"></div>
<span class="t" style="left:540.5px;top:283px;font-size:10.8px;line-height:12px;color:#555;transform:scaleX(1.0109);">Organization</span>
<span class="t" style="left:540.5px;top:295px;font-size:10.8px;line-height:12px;color:#555;transform:scaleX(1.0397);">indicator value</span>
<span class="t" style="left:540.5px;top:315px;font-size:10.8px;line-height:12px;color:#555;transform:scaleX(1.0659);">Minimum value</span>
<span class="t" style="left:540.5px;top:341px;font-size:10.8px;line-height:12px;color:#555;transform:scaleX(1.0500);">Maximum value</span>
<span class="t" style="left:540.5px;top:367px;font-size:10.8px;line-height:12px;color:#555;transform:scaleX(1.0514);">Mean value</span>
<span class="t" style="left:716.84px;top:289px;font-size:10.67px;line-height:12px;color:#444;">643 069 000,00</span>
<span class="t" style="left:840.84px;top:289px;font-size:10.67px;line-height:12px;color:#444;">834 868 000,00</span>
<span class="t" style="left:964.84px;top:289px;font-size:10.67px;line-height:12px;color:#444;">916 916 000,00</span>
<span class="t" style="left:1079.94px;top:289px;font-size:10.67px;line-height:12px;color:#444;">1 177 858 000,00</span>
<span class="t" style="left:1204.44px;top:289px;font-size:10.67px;line-height:12px;color:#444;">1 898 681 000,00</span>
<span class="t" style="left:749.47px;top:315px;font-size:10.67px;line-height:12px;color:#444;">1 000,00</span>
<span class="t" style="left:873.47px;top:315px;font-size:10.67px;line-height:12px;color:#444;">1 000,00</span>
<span class="t" style="left:997.47px;top:315px;font-size:10.67px;line-height:12px;color:#444;">1 000,00</span>
<span class="t" style="left:1121.47px;top:315px;font-size:10.67px;line-height:12px;color:#444;">1 000,00</span>
<span class="t" style="left:1242.42px;top:315px;font-size:10.67px;line-height:12px;color:#444;">-8 000,00</span>
<span class="t" style="left:702.01px;top:341px;font-size:10.67px;line-height:12px;color:#444;">30 036 863 000,00</span>
<span class="t" style="left:826.8px;top:341px;font-size:10.67px;line-height:12px;color:#444;">40 482 711 000,00</span>
<span class="t" style="left:950.01px;top:341px;font-size:10.67px;line-height:12px;color:#444;">51 506 039 000,00</span>
<span class="t" style="left:1074.8px;top:341px;font-size:10.67px;line-height:12px;color:#444;">60 403 117 000,00</span>
<span class="t" style="left:1198.51px;top:341px;font-size:10.67px;line-height:12px;color:#444;">71 693 127 000,00</span>
<span class="t" style="left:716.84px;top:367px;font-size:10.67px;line-height:12px;color:#444;">142 145 484,59</span>
<span class="t" style="left:846.77px;top:367px;font-size:10.67px;line-height:12px;color:#444;">52 627 063,90</span>
<span class="t" style="left:970.77px;top:367px;font-size:10.67px;line-height:12px;color:#444;">52 995 334,08</span>
<span class="t" style="left:1094.77px;top:367px;font-size:10.67px;line-height:12px;color:#444;">59 874 664,32</span>
<span class="t" style="left:1219.27px;top:367px;font-size:10.67px;line-height:12px;color:#444;">52 705 372,08</span>
<div style="left:669px;top:233px;width:1px;height:375px;background:#8a8a8a;"></div>
<div style="left:297px;top:389.5px;width:996.5px;height:163px;border:1px solid #d9d9d9;background:#fff;"></div>
<svg style="left:0;top:0" width="1319" height="658" viewBox="0 0 1319 658"><path d="M409 403.5 H1277" stroke="#dedede" stroke-width="1"/><path d="M409 424.5 H1277" stroke="#dedede" stroke-width="1"/><path d="M409 444.5 H1277" stroke="#dedede" stroke-width="1"/><path d="M409 465.5 H1277" stroke="#dedede" stroke-width="1"/><path d="M409 486.5 H1277" stroke="#dedede" stroke-width="1"/><path d="M409 506.5 H1277" stroke="#dedede" stroke-width="1"/><polyline points="496,485.54 669.6,485.34 843.2,485.25 1016.8,484.99 1190.4,484.24" fill="none" stroke="#5b9bd5" stroke-width="3" stroke-linecap="round" stroke-linejoin="round"/><polyline points="496,486.2 669.6,486.2 843.2,486.2 1016.8,486.2 1190.4,486.2" fill="none" stroke="#ed7d31" stroke-width="3" stroke-linecap="round" stroke-linejoin="round"/><polyline points="496,455.23 669.6,444.46 843.2,433.1 1016.8,423.92 1190.4,412.28" fill="none" stroke="#a5a5a5" stroke-width="3" stroke-linecap="round" stroke-linejoin="round"/><polyline points="496,486.05 669.6,486.15 843.2,486.15 1016.8,486.14 1190.4,486.15" fill="none" stroke="#ffc000" stroke-width="3" stroke-linecap="round" stroke-linejoin="round"/><path d="M508.6 532.3 H534" stroke="#5b9bd5" stroke-width="3" stroke-linecap="round"/><path d="M738 532.3 H763.5" stroke="#ed7d31" stroke-width="3" stroke-linecap="round"/><path d="M868 532.3 H892" stroke="#a5a5a5" stroke-width="3" stroke-linecap="round"/><path d="M998.5 532.3 H1023" stroke="#ffc000" stroke-width="3" stroke-linecap="round"/></svg>
<span class="t" style="left:307.6px;top:397px;font-size:10.6px;line-height:12px;color:#595959;transform:scaleX(1.0237);">80 000 000 000,00</span>
<span class="t" style="left:307.6px;top:417px;font-size:10.6px;line-height:12px;color:#595959;transform:scaleX(1.0237);">60 000 000 000,00</span>
<span class="t" style="left:307.6px;top:438px;font-size:10.6px;line-height:12px;color:#595959;transform:scaleX(1.0237);">40 000 000 000,00</span>
<span class="t" style="left:307.6px;top:458px;font-size:10.6px;line-height:12px;color:#595959;transform:scaleX(1.0237);">20 000 000 000,00</span>
<span class="t" style="left:377.47px;top:479px;font-size:10.6px;line-height:12px;color:#595959;">0,00</span>
<span class="t" style="left:304.1px;top:500px;font-size:10.6px;line-height:12px;color:#595959;transform:scaleX(1.0224);">-20 000 000 000,00</span>
<span class="t" style="left:493.35px;top:495px;font-size:10.6px;line-height:12px;color:#595959;">1</span>
<span class="t" style="left:666.95px;top:495px;font-size:10.6px;line-height:12px;color:#595959;">2</span>
<span class="t" style="left:840.55px;top:495px;font-size:10.6px;line-height:12px;color:#595959;">3</span>
<span class="t" style="left:1014.15px;top:495px;font-size:10.6px;line-height:12px;color:#595959;">4</span>
<span class="t" style="left:1187.75px;top:495px;font-size:10.6px;line-height:12px;color:#595959;">5</span>
<span class="t" style="left:537.2px;top:526px;font-size:10.6px;line-height:12px;color:#595959;transform:scaleX(1.0442);">Organization indicator value</span>
<span class="t" style="left:766.5px;top:526px;font-size:10.6px;line-height:12px;color:#595959;transform:scaleX(1.0663);">Minimum value</span>
<span class="t" style="left:895.5px;top:526px;font-size:10.6px;line-height:12px;color:#595959;transform:scaleX(1.0510);">Maximum value</span>
<span class="t" style="left:1026.5px;top:526px;font-size:10.6px;line-height:12px;color:#595959;transform:scaleX(1.0402);">Mean value</span>
<div style="left:669px;top:389px;width:1px;height:219px;background:#8a8a8a;"></div>
<div style="left:1303px;top:233px;width:15px;height:375px;background:#f0f0f0;"></div>
<div style="left:1303px;top:235px;width:15px;height:15px;border:1px solid #ababab;background:#fff;"></div>
<svg style="left:1306.5px;top:239.5px" width="8" height="5" viewBox="0 0 8 5"><path d="M0 4.6 L4 0.4 L8 4.6 Z" fill="#606060"/></svg>
<div style="left:1303px;top:249px;width:15px;height:270px;border:1px solid #ababab;background:#fff;"></div>
<div style="left:1303px;top:592px;width:15px;height:15px;border:1px solid #ababab;background:#fff;"></div>
<svg style="left:1306.5px;top:597.5px" width="8" height="5" viewBox="0 0 8 5"><path d="M0 0.4 H8 L4 4.6 Z" fill="#606060"/></svg>
<div style="left:290px;top:607px;width:1029px;height:27px;background:#fff;"></div>
<div style="left:290px;top:607px;width:1029px;height:27px;background:#f5f5f5;"></div>
<div style="left:290px;top:607px;width:1009px;height:1px;background:#ababab;"></div>
<div style="left:290px;top:608px;width:1px;height:25px;background:#c9c9c9;"></div>
<div style="left:390px;top:607px;width:191px;height:25px;background:#fff;border-left:1px solid #ababab;border-right:1px solid #ababab;border-bottom:2px solid #217346;"></div>
<span class="t" style="left:401.5px;top:613px;font-size:12.5px;line-height:16px;color:#217346;font-weight:bold;transform:scaleX(1.0356);">Organization state analysis</span>
<svg style="left:316px;top:616.7px" width="6" height="8" viewBox="0 0 6 8"><path d="M5.5 0.5 V7.5 L0.8 4 Z" fill="#c3c3c3"/></svg>
<svg style="left:345px;top:616.7px" width="6" height="8" viewBox="0 0 6 8"><path d="M0.5 0.5 V7.5 L5.2 4 Z" fill="#c3c3c3"/></svg>
<svg style="left:612px;top:611.5px" width="19" height="19" viewBox="0 0 19 19"><circle cx="9.5" cy="9.5" r="7.6" fill="none" stroke="#666" stroke-width="1.1"/><path d="M5.5 9.5 H13.5 M9.5 5.5 V13.5" stroke="#555" stroke-width="1.7"/></svg>
<div style="left:908.5px;top:615.5px;width:1.5px;height:1.5px;background:#9a9a9a;"></div>
<div style="left:908.5px;top:619.5px;width:1.5px;height:1.5px;background:#9a9a9a;"></div>
<div style="left:908.5px;top:623.5px;width:1.5px;height:1.5px;background:#9a9a9a;"></div>
<div style="left:925px;top:614px;width:373px;height:15px;background:#e8e8e8;"></div>
<div style="left:925px;top:614px;width:14px;height:15px;border:1px solid #ababab;background:#fff;"></div>
<svg style="left:929.5px;top:617.5px" width="5" height="8" viewBox="0 0 5 8"><path d="M4.8 0 V8 L0.4 4 Z" fill="#606060"/></svg>
<div style="left:938px;top:614px;width:259px;height:15px;border:1px solid #ababab;background:#fff;"></div>
<div style="left:1283px;top:614px;width:15px;height:15px;border:1px solid #ababab;background:#fff;"></div>
<svg style="left:1288.5px;top:617.5px" width="5" height="8" viewBox="0 0 5 8"><path d="M0.2 0 V8 L4.6 4 Z" fill="#606060"/></svg>
<div style="left:0px;top:635px;width:1319px;height:23px;background:#217346;"></div>
<span class="t" style="left:8.1px;top:639px;font-size:11px;line-height:14px;color:#fff;transform:scaleX(0.8813);">READY</span>
<div style="left:1018px;top:636px;width:38px;height:20.5px;background:#0e5c31;"></div>
<svg style="left:1030px;top:639px" width="13" height="13" viewBox="0 0 13 13"><rect x="0.6" y="0.6" width="11.8" height="11.8" fill="none" stroke="#fff" stroke-width="1.2"/><path d="M4.5 0.6 V12.4 M8.5 0.6 V12.4 M0.6 4.5 H12.4 M0.6 8.5 H12.4" stroke="#fff" stroke-width="1.1"/></svg>
<svg style="left:1068px;top:639px" width="14" height="13" viewBox="0 0 14 13"><rect x="0.6" y="0.6" width="12.8" height="11.8" fill="none" stroke="#fff" stroke-width="1.2"/><rect x="3.6" y="2.8" width="6.8" height="7.4" fill="none" stroke="#fff" stroke-width="1"/><path d="M5 4.8 h4 M5 6.5 h4 M5 8.2 h4" stroke="#fff" stroke-width="0.8"/></svg>
<svg style="left:1106px;top:639px" width="14" height="13" viewBox="0 0 14 13"><rect x="0.6" y="0.6" width="12.8" height="11.8" fill="none" stroke="#fff" stroke-width="1.2"/><rect x="1" y="1" width="3.6" height="7" fill="#fff"/><rect x="5.6" y="1" width="3.6" height="7" fill="#eef5f0"/></svg>
<div style="left:1137px;top:645px;width:6px;height:2px;background:#fff;"></div>
<div style="left:1147px;top:645px;width:100px;height:1px;background:#fff;"></div>
<div style="left:1195px;top:640px;width:4px;height:11px;background:#fff;"></div>
<div style="left:1251px;top:645px;width:8px;height:2px;background:#fff;"></div>
<div style="left:1254px;top:642px;width:2px;height:8px;background:#fff;"></div>
<span class="t" style="left:1275.5px;top:638px;font-size:11px;line-height:14px;color:#fff;transform:scaleX(0.9597);">100%</span>
</div></body></html>
